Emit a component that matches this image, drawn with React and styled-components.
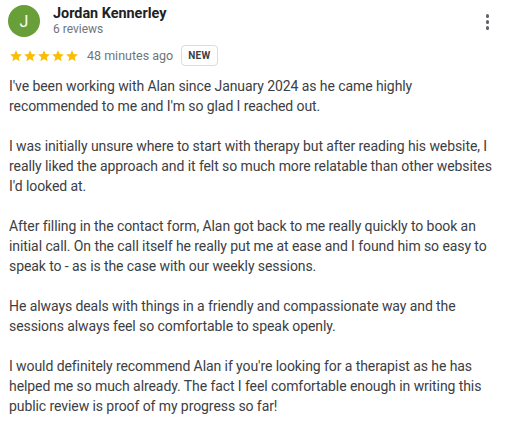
import React from "react";
import styled, { createGlobalStyle } from "styled-components";

const GlobalStyle = createGlobalStyle`
  body {
    margin: 0;
    background: #fff;
    font-family: Roboto, "Noto Sans", Arial, sans-serif;
  }
`;

const paragraphs = [
  "I've been working with Alan since January 2024 as he came highly recommended to me and I'm so glad I reached out.",
  "I was initially unsure where to start with therapy but after reading his website, I really liked the approach and it felt so much more relatable than other websites I'd looked at.",
  "After filling in the contact form, Alan got back to me really quickly to book an initial call. On the call itself he really put me at ease and I found him so easy to speak to - as is the case with our weekly sessions.",
  "He always deals with things in a friendly and compassionate way and the sessions always feel so comfortable to speak openly.",
  "I would definitely recommend Alan if you're looking for a therapist as he has helped me so much already. The fact I feel comfortable enough in writing this public review is proof of my progress so far!",
];

const Star = () => (
  <svg width="14" height="14" viewBox="0 0 24 24">
    <path
      fill="#fbbc04"
      d="M12 17.27L18.18 21l-1.64-7.03L22 9.24l-7.19-.61L12 2 9.19 8.63 2 9.24l5.46 4.73L5.82 21z"
    />
  </svg>
);

export default function App() {
  return (
    <>
      <GlobalStyle />
      <Card>
        <Header>
          <Avatar>J</Avatar>
          <Author>
            <Name>Jordan Kennerley</Name>
            <Count>6 reviews</Count>
          </Author>
          <MenuButton aria-label="More">
            <Dot />
            <Dot />
            <Dot />
          </MenuButton>
        </Header>
        <Meta>
          <Stars>
            {[0, 1, 2, 3, 4].map(i => (
              <Star key={i} />
            ))}
          </Stars>
          <Time>48 minutes ago</Time>
          <Badge>NEW</Badge>
        </Meta>
        <Body>
          {paragraphs.map((p, i) => (
            <Paragraph key={i}>{p}</Paragraph>
          ))}
        </Body>
      </Card>
    </>
  );
}

const Card = styled.div`
  padding: 5px 6px 0 8px;
  width: 505px;
  box-sizing: border-box;
`;

const Header = styled.div`
  display: flex;
  align-items: flex-start;
`;

const Avatar = styled.div`
  width: 32px;
  height: 32px;
  border-radius: 50%;
  background: #689f38;
  color: #fff;
  display: flex;
  align-items: center;
  justify-content: center;
  font-size: 16px;
  flex-shrink: 0;
`;

const Author = styled.div`
  flex: 1;
  margin-left: 13px;
`;

const Name = styled.div`
  font-size: 14.4px;
  font-weight: 700;
  color: #202124;
  line-height: 17px;
`;

const Count = styled.div`
  font-size: 12px;
  color: #70757a;
  line-height: 14px;
`;

const MenuButton = styled.div`
  display: flex;
  flex-direction: column;
  align-items: center;
  gap: 2.5px;
  padding-top: 9px;
  margin-right: 10px;
`;

const Dot = styled.span`
  width: 3.5px;
  height: 3.5px;
  border-radius: 50%;
  background: #5f6368;
`;

const Meta = styled.div`
  display: flex;
  align-items: center;
  margin-top: 8px;
  padding-left: 1px;
`;

const Stars = styled.div`
  display: flex;
  gap: 0;
`;

const Time = styled.span`
  font-size: 12.5px;
  color: #70757a;
  margin-left: 8px;
`;

const Badge = styled.span`
  margin-left: 8px;
  border: 1px solid #dadce0;
  border-radius: 4px;
  padding: 0 6px;
  height: 19px;
  display: inline-flex;
  align-items: center;
  font-size: 10px;
  font-weight: 700;
  color: #3c4043;
  letter-spacing: 0.3px;
`;

const Body = styled.div`
  margin-top: 10px;
  padding-left: 1px;
`;

const Paragraph = styled.p`
  margin: 0 0 20px;
  font-size: 14px;
  line-height: 20px;
  color: #3c4043;
  letter-spacing: -0.08px;
`;
